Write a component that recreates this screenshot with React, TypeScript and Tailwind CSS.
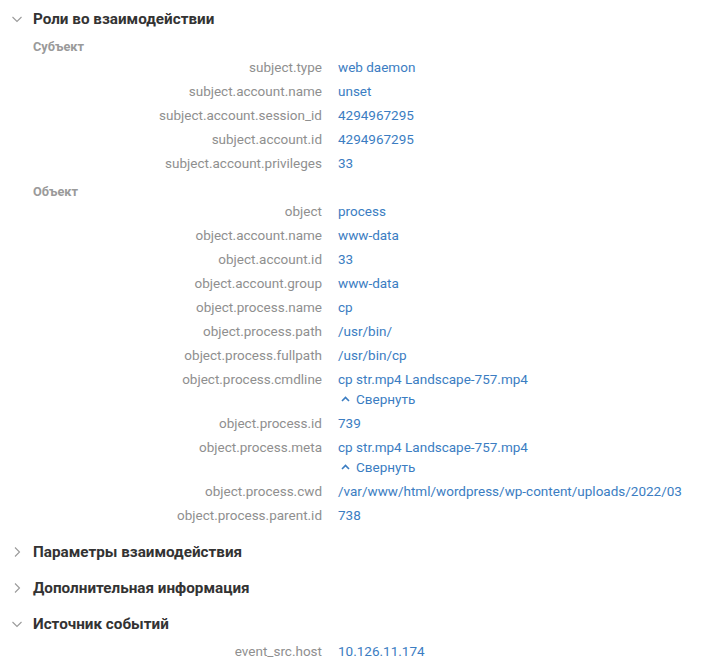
import React from "react";

type Row = { k: string; v: string; collapse?: boolean };

const Chevron = ({ open }: { open: boolean }) => (
  <svg width="12" height="12" viewBox="0 0 12 12" className="shrink-0">
    {open ? (
      <path d="M1.5 4 L6 8.5 L10.5 4" fill="none" stroke="#9a9a9a" strokeWidth="1.1" />
    ) : (
      <path d="M4 1.5 L8.5 6 L4 10.5" fill="none" stroke="#9a9a9a" strokeWidth="1.1" />
    )}
  </svg>
);

const Header = ({ title, open }: { title: string; open: boolean }) => (
  <div className="flex items-center h-[36px] pl-[11px] gap-[10px]">
    <Chevron open={open} />
    <span className="text-[15.25px] font-bold text-[#333333]">{title}</span>
  </div>
);

const Sub = ({ title }: { title: string }) => (
  <div className="h-[18px] pt-[2px] pl-[33px] flex items-center text-[12.75px] font-bold text-[#9a9a9a]">{title}</div>
);

const KV = ({ r }: { r: Row }) => (
  <div className="flex">
    <div className="w-[322px] shrink-0 text-right text-[13.5px] leading-[24px] text-[#8f8f8f] whitespace-nowrap">{r.k}</div>
    <div className="pl-[16px] flex flex-col">
      <div className="text-[13.5px] leading-[24px] text-[#3b7dc2] whitespace-nowrap">{r.v}</div>
      {r.collapse && (
        <div className="flex items-center gap-[6px] h-[16px] mb-[4px] pl-[3px] text-[13.5px] text-[#3b7dc2]">
          <svg width="9" height="6" viewBox="0 0 9 6">
            <path d="M1 5 L4.5 1.5 L8 5" fill="none" stroke="#3b7dc2" strokeWidth="1.6" />
          </svg>
          <span>Свернуть</span>
        </div>
      )}
    </div>
  </div>
);

const subj: Row[] = [
  { k: "subject.type", v: "web daemon" },
  { k: "subject.account.name", v: "unset" },
  { k: "subject.account.session_id", v: "4294967295" },
  { k: "subject.account.id", v: "4294967295" },
  { k: "subject.account.privileges", v: "33" },
];

const obj: Row[] = [
  { k: "object", v: "process" },
  { k: "object.account.name", v: "www-data" },
  { k: "object.account.id", v: "33" },
  { k: "object.account.group", v: "www-data" },
  { k: "object.process.name", v: "cp" },
  { k: "object.process.path", v: "/usr/bin/" },
  { k: "object.process.fullpath", v: "/usr/bin/cp" },
  { k: "object.process.cmdline", v: "cp str.mp4 Landscape-757.mp4", collapse: true },
  { k: "object.process.id", v: "739" },
  { k: "object.process.meta", v: "cp str.mp4 Landscape-757.mp4", collapse: true },
  { k: "object.process.cwd", v: "/var/www/html/wordpress/wp-content/uploads/2022/03" },
  { k: "object.process.parent.id", v: "738" },
];

export default function App() {
  return (
    <div className="w-[727px] h-[664px] bg-white overflow-hidden" style={{ fontFamily: "Roboto, 'Noto Sans', sans-serif" }}>
      <div className="pt-[1px]">
        <Header title="Роли во взаимодействии" open />
        <Sub title="Субъект" />
        {subj.map((r) => (
          <KV key={r.k} r={r} />
        ))}
        <div className="h-[7px]" />
        <div className="-mb-[1px]">
          <Sub title="Объект" />
        </div>
        {obj.map((r) => (
          <KV key={r.k} r={r} />
        ))}
        <div className="h-[7px]" />
        <Header title="Параметры взаимодействия" open={false} />
        <Header title="Дополнительная информация" open={false} />
        <Header title="Источник событий" open />
        <div className="-mt-[3px]">
          <KV r={{ k: "event_src.host", v: "10.126.11.174" }} />
        </div>
      </div>
    </div>
  );
}
